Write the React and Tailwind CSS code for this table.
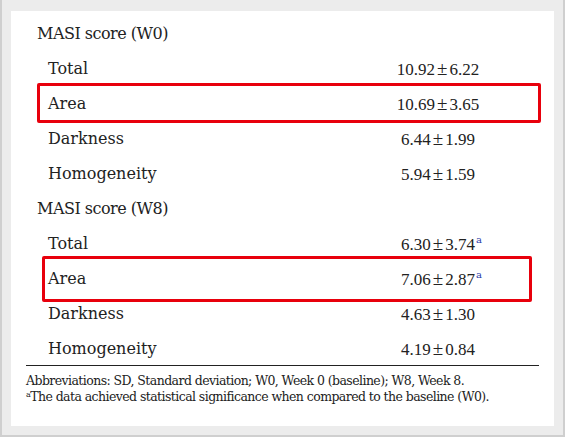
export default function App() {
  const serif = { fontFamily: '"DejaVu Serif", "Liberation Serif", serif' };
  const Sup = () => (
    <span className="absolute left-full top-[1px] ml-[1px] text-[10px] leading-none text-[#2b3aa8]" style={{ fontFamily: '"DejaVu Serif", serif' }}>a</span>
  );
  const Val = ({ v, sup }) => {
    const [a, b] = v.split("±");
    return (
      <span className="relative inline-flex items-baseline text-[17px]" style={{ fontFamily: '"Liberation Serif", serif' }}>
        <span>{a}</span>
        <span className="mx-[2px] text-[19px]">±</span>
        <span>{b}</span>
        {sup && <Sup />}
      </span>
    );
  };
  const Row = ({ label, value, sup, header }) => (
    <div className="flex h-[35px] items-center">
      <div className={header ? "pl-[11px] flex-1 tracking-[-0.5px]" : "pl-[22px] flex-1"}>{label}</div>
      {value && (
        <div className="w-[200px] flex justify-center pr-[2px] mt-[-1px]">
          <Val v={value} sup={sup} />
        </div>
      )}
    </div>
  );
  return (
    <div className="w-[565px] h-[437px] bg-[#ececec] border-x-2 border-b-2 border-[#cfcfcf] pt-[11px] px-[9px]">
      <div className="bg-white h-[415px] pt-[5px] px-[15px] text-[#222]" style={serif}>
        <div className="text-[16px] leading-none">
          <Row header label="MASI score (W0)" />
          <Row label="Total" value="10.92±6.22" />
          <div className="relative">
            <div className="absolute left-[11px] right-[-2px] top-[-3px] bottom-[-2px] border-[3.5px] border-[#e8000c] rounded-[2px]" />
            <Row label="Area" value="10.69±3.65" />
          </div>
          <Row label="Darkness" value="6.44±1.99" />
          <Row label="Homogeneity" value="5.94±1.59" />
          <Row header label="MASI score (W8)" />
          <Row label="Total" value="6.30±3.74" sup />
          <div className="relative">
            <div className="absolute left-[16px] right-[7px] top-[-5px] bottom-[-6px] border-[3.5px] border-[#e8000c] rounded-[2px]" />
            <Row label="Area" value="7.06±2.87" sup />
          </div>
          <Row label="Darkness" value="4.63±1.30" />
          <Row label="Homogeneity" value="4.19±0.84" />
        </div>
        <div className="border-t-[1.5px] border-[#222] mt-[-1px] pt-[7px] text-[12.5px] leading-[16px] tracking-[-0.57px]">
          <div>Abbreviations: SD, Standard deviation; W0, Week 0 (baseline); W8, Week 8.</div>
          <div>
            <sup className="text-[8px]">a</sup>The data achieved statistical significance when compared to the baseline (W0).
          </div>
        </div>
      </div>
    </div>
  );
}
